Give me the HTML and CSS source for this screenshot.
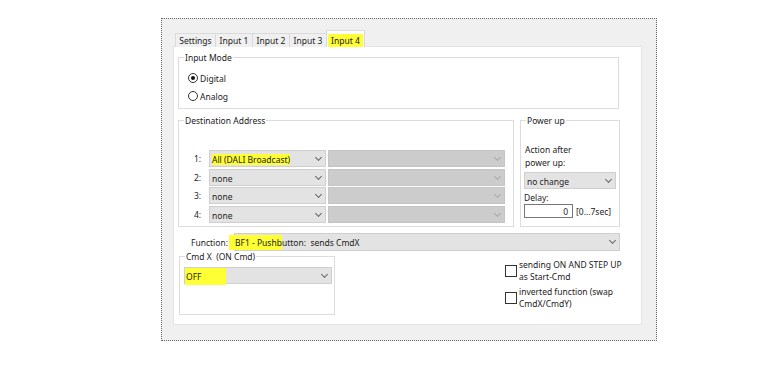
FILE: index.html
```html
<!DOCTYPE html>
<html lang="en">
<head>
    <meta charset="UTF-8">
    <title>Input 4</title>
    <link rel="stylesheet" href="styles.css">
</head>
<body>

    <div class="frame">
        <!-- Tabs -->
        <div class="tabs">
            <div class="tab t-settings">Settings</div>
            <div class="tab">Input 1</div>
            <div class="tab">Input 2</div>
            <div class="tab">Input 3</div>
            <div class="tab active"><span class="mark">Input 4</span></div>
        </div>

        <div class="panel">
            <!-- Input Mode -->
            <fieldset class="group mode">
                <legend>Input Mode</legend>
                <div class="inner">
                    <label class="radio"><span class="dot on"></span>Digital</label>
                    <label class="radio"><span class="dot"></span>Analog</label>
                </div>
            </fieldset>

            <div class="middle">
                <!-- Destination Address -->
                <fieldset class="group dest">
                    <legend>Destination Address</legend>
                    <div class="inner">
                        <div class="addr">
                            <span class="num">1:</span>
                            <div class="combo"><span class="mark">All (DALI Broadcast)</span><i class="chev"></i></div>
                            <div class="combo off"><i class="chev"></i></div>
                        </div>
                        <div class="addr">
                            <span class="num">2:</span>
                            <div class="combo">none<i class="chev"></i></div>
                            <div class="combo off"><i class="chev"></i></div>
                        </div>
                        <div class="addr">
                            <span class="num">3:</span>
                            <div class="combo">none<i class="chev"></i></div>
                            <div class="combo off"><i class="chev"></i></div>
                        </div>
                        <div class="addr">
                            <span class="num">4:</span>
                            <div class="combo">none<i class="chev"></i></div>
                            <div class="combo off"><i class="chev"></i></div>
                        </div>
                    </div>
                </fieldset>

                <!-- Power up -->
                <fieldset class="group power">
                    <legend>Power up</legend>
                    <div class="inner">
                        <div class="action">Action after<br>power up:</div>
                        <div class="combo">no change<i class="chev"></i></div>
                        <div class="delay-label">Delay:</div>
                        <div class="delay">
                            <span class="num-box">0</span>
                            <span>[0...7sec]</span>
                        </div>
                    </div>
                </fieldset>
            </div>

            <!-- Function -->
            <div class="func">
                <span class="func-label">Function:</span>
                <div class="combo wide"><span><span class="mark fn-mark">BF1 - Pushb</span>utton:&nbsp; sends CmdX</span><i class="chev"></i></div>
            </div>

            <div class="bottom">
                <!-- Cmd X -->
                <fieldset class="group cmd">
                    <legend>Cmd X&nbsp; (ON Cmd)</legend>
                    <div class="inner">
                        <div class="combo"><span class="mark off-mark">OFF</span><i class="chev"></i></div>
                    </div>
                </fieldset>

                <!-- Options -->
                <div class="checks">
                    <label class="check"><span class="box"></span><span>sending ON AND STEP UP<br>as Start-Cmd</span></label>
                    <label class="check"><span class="box"></span><span>inverted function (swap<br>CmdX/CmdY)</span></label>
                </div>
            </div>
        </div>
    </div>

</body>
</html>
```

FILE: styles.css
```css
/* Windows dialog look */
body {
    margin: 0;
    padding: 18px 0 0 161px;
    background: #fff;
    font-family: 'Noto Sans', 'Open Sans', sans-serif;
    font-size: 8.5px;
    color: #222;
}

.frame {
    border: 1px dotted #666;
    background: #f0f0f0;
    padding: 11px 14px 14px 11px;
    width: 469px;
    height: 296px;
}

.tabs {
    display: flex;
    align-items: flex-end;
    height: 17px;
    padding-left: 2px;
}

.tab {
    width: 38px;
    height: 14px;
    line-height: 14px;
    text-align: center;
    border: 1px solid #dadada;
    border-bottom: none;
    margin-right: -1px;
    background: #f0f0f0;
    box-sizing: border-box;
    white-space: nowrap;
}

.tab.t-settings {
    width: 41px;
}

.tab.active {
    height: 17px;
    width: 39px;
    background: #fff;
    padding: 3px 1px 0;
    position: relative;
    z-index: 1;
}

.tab.active .mark {
    display: block;
    height: 13px;
    line-height: 13px;
}

.mark {
    background: #ffff33;
}

.panel {
    background: #fff;
    height: 279px;
    padding: 5px 0 0 4px;
    box-sizing: border-box;
    border: 1px solid #e4e4e4;
    margin-top: -1px;
}

.group {
    margin: 0;
    border: 1px solid #dcdcdc;
    padding: 0;
    min-width: 0;
    box-sizing: border-box;
}

.group legend {
    padding: 0 1px;
    margin-left: 5px;
    line-height: 11px;
}

.mode {
    width: 441px;
    height: 57px;
}

.mode .inner {
    padding: 6px 0 0 9px;
}

.radio {
    display: flex;
    align-items: center;
    height: 18px;
}

.dot {
    width: 8px;
    height: 8px;
    border: 1px solid #333;
    border-radius: 50%;
    margin-right: 2px;
    position: relative;
}

.dot.on::after {
    content: "";
    position: absolute;
    left: 2px;
    top: 2px;
    width: 4px;
    height: 4px;
    border-radius: 50%;
    background: #111;
}

.middle {
    display: flex;
    gap: 6px;
    margin-top: 6px;
}

.dest {
    width: 336px;
    height: 112px;
}

.dest .inner {
    padding: 24px 0 0 15px;
}

.addr {
    display: flex;
    align-items: center;
    height: 17px;
    margin-bottom: 1.5px;
}

.num {
    width: 15px;
}

.combo {
    position: relative;
    height: 17px;
    line-height: 17px;
    background: #e3e3e3;
    border: 1px solid #cfcfcf;
    box-sizing: border-box;
    padding-left: 2px;
    white-space: nowrap;
}

.addr .combo {
    width: 117px;
}

.addr .combo.off {
    width: 177px;
    margin-left: 2px;
    background: #cccccc;
    border-color: #c4c4c4;
}

.chev {
    position: absolute;
    right: 4px;
    top: 4px;
    width: 4px;
    height: 4px;
    border-right: 1px solid #666;
    border-bottom: 1px solid #666;
    transform: rotate(45deg);
}

.combo.off .chev {
    border-color: #aaa;
}

.power {
    width: 100px;
    height: 112px;
}

.power .inner {
    padding: 17px 0 0 3px;
}

.action {
    line-height: 13px;
    padding-left: 1px;
}

.power .combo {
    width: 92px;
    margin-top: 3px;
}

.delay-label {
    margin-top: 3px;
    line-height: 12px;
}

.delay {
    display: flex;
    align-items: center;
    gap: 3px;
}

.num-box {
    width: 49px;
    height: 14px;
    line-height: 14px;
    border: 1px solid #777;
    box-sizing: border-box;
    text-align: right;
    padding-right: 4px;
}

.func {
    display: flex;
    align-items: center;
    margin-top: 6px;
}

.func-label {
    width: 56px;
    padding-left: 13px;
    box-sizing: border-box;
}

.combo.wide {
    width: 386px;
    height: 18px;
    line-height: 18px;
}

.fn-mark {
    display: inline-block;
    line-height: 15px;
    margin-left: -8px;
    padding-left: 6px;
}

.bottom {
    display: flex;
    margin-top: 0;
}

.cmd {
    width: 156px;
    height: 64px;
    margin-left: 1px;
}

.cmd .inner {
    padding: 5px 0 0 4px;
}

.cmd .combo {
    width: 148px;
}

.off-mark {
    display: inline-block;
    width: 40px;
    padding-left: 1px;
    margin-left: -2px;
}

.checks {
    margin-left: 170px;
    padding-top: 8px;
}

.check {
    display: flex;
    align-items: center;
    line-height: 12px;
    margin-bottom: 3px;
}

.box {
    width: 10px;
    height: 10px;
    border: 1px solid #333;
    margin-right: 2px;
    flex-shrink: 0;
}
```
